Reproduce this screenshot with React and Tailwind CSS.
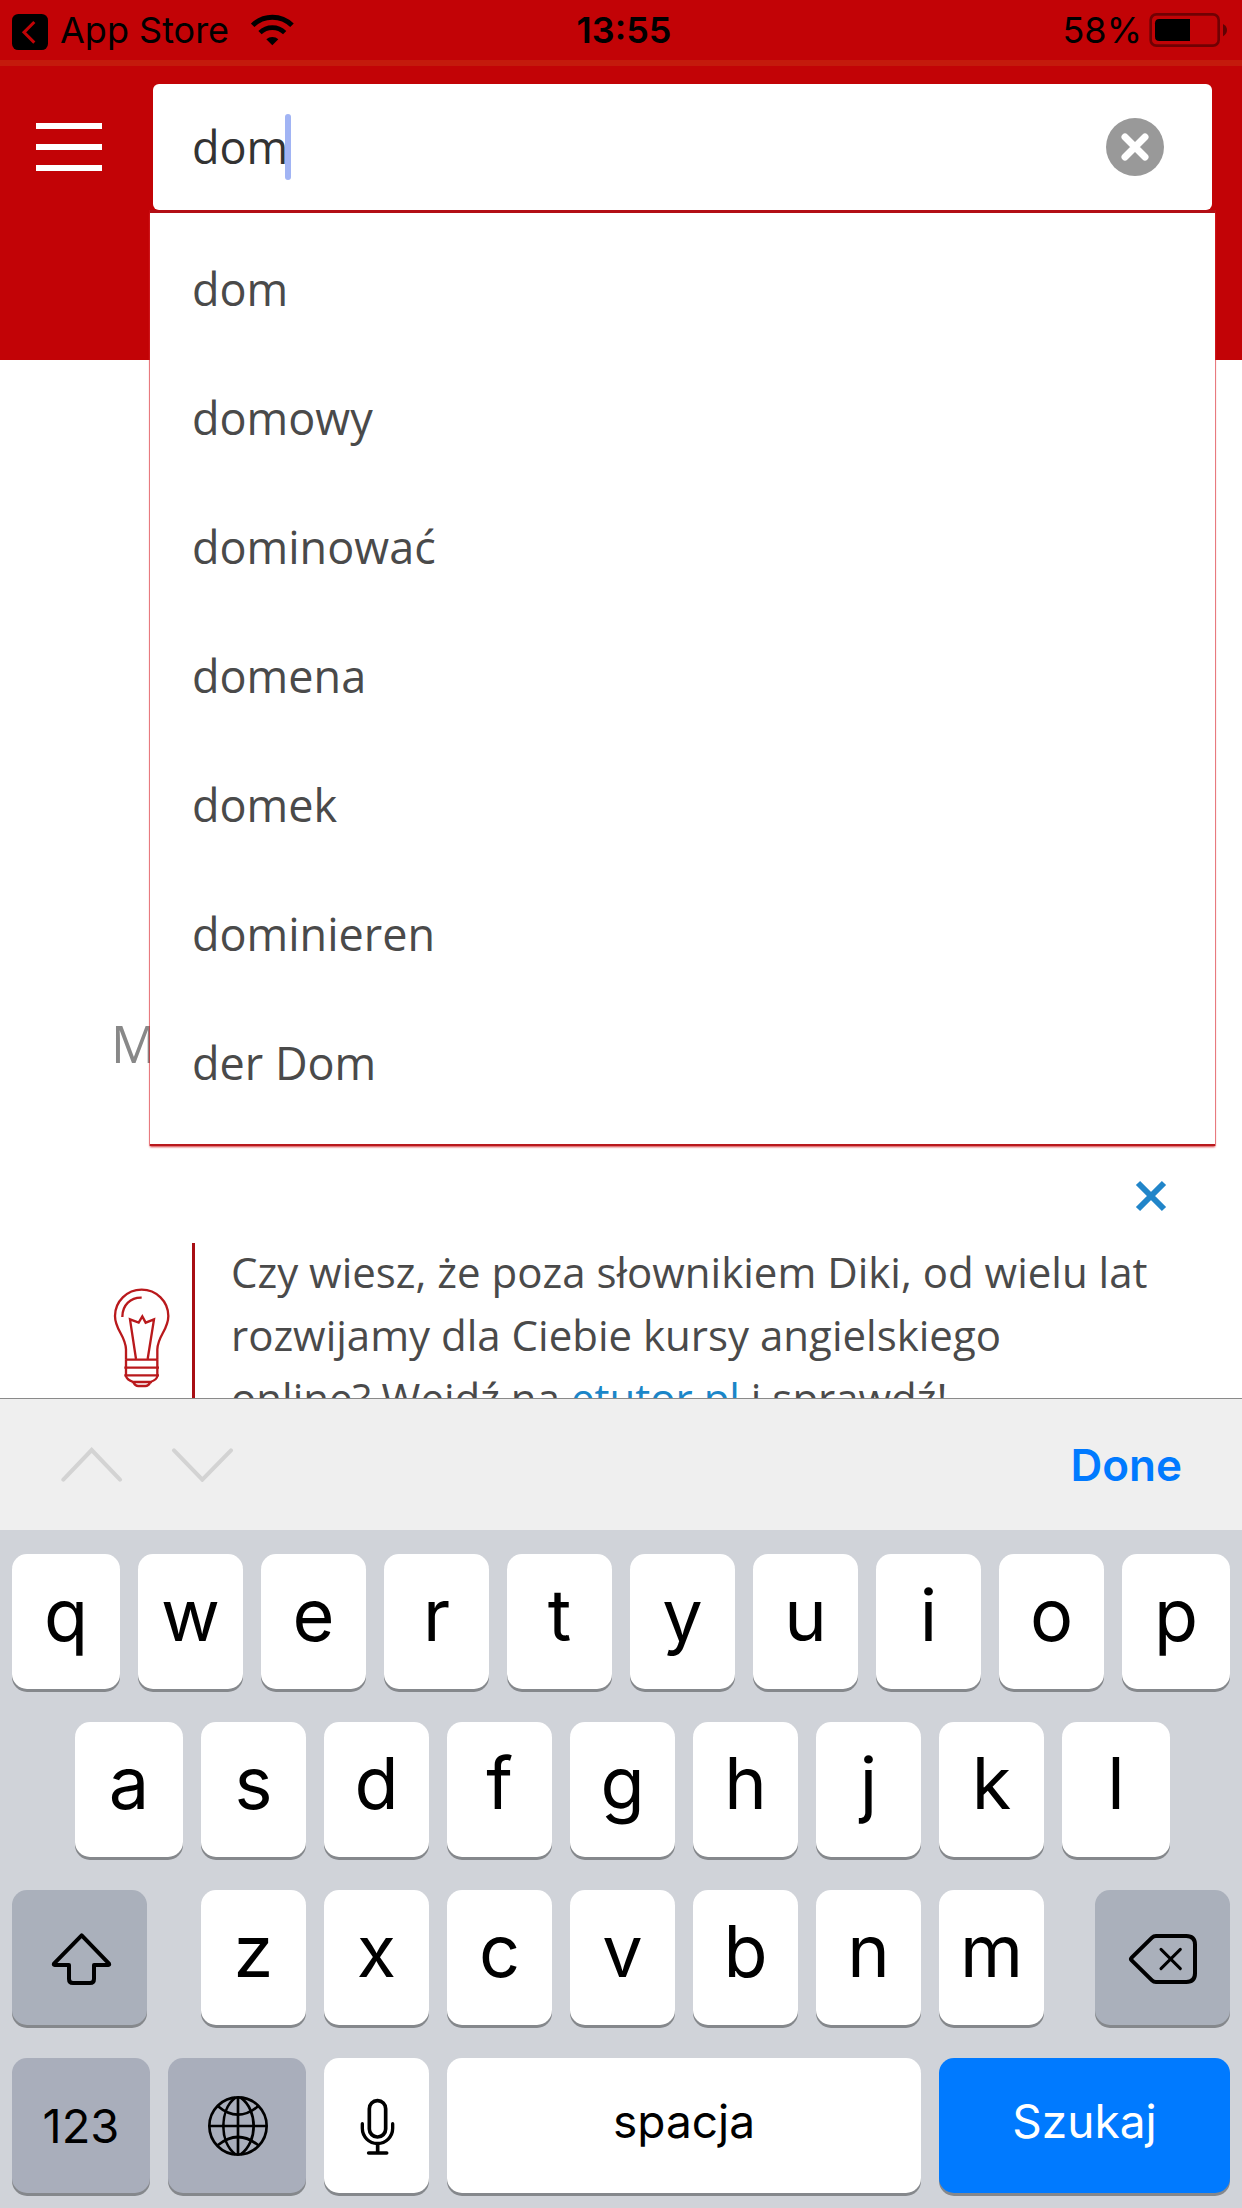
import { useState } from 'react'

const SUGGESTIONS = ['dom', 'domowy', 'dominować', 'domena', 'domek', 'dominieren', 'der Dom']

const ROW_1 = ['q', 'w', 'e', 'r', 't', 'y', 'u', 'i', 'o', 'p']
const ROW_2 = ['a', 's', 'd', 'f', 'g', 'h', 'j', 'k', 'l']
const ROW_3 = ['z', 'x', 'c', 'v', 'b', 'n', 'm']

// outer keys of the first two rows are a touch wider than the rest
const LETTER = 'flex-1 bg-white text-[72px] pb-3.5'
const LETTER_EDGE = 'flex-[105_1_0%] first:flex-[108_1_0%] last:flex-[108_1_0%] bg-white text-[72px] pb-3.5'

function BackIcon() {
  return (
    <svg viewBox="36 30 108 120" className="w-9 h-10" aria-hidden="true">
      <rect x="36" y="42" width="108" height="108" rx="19" fill="#000" />
      <path d="M103 66L72 97L103 128" fill="none" stroke="#c20306" strokeWidth="9" />
    </svg>
  )
}

function WifiIcon() {
  return (
    <svg viewBox="756 42 129 96" className="w-[43px] h-8" aria-hidden="true">
      <path d="M761 76A84 84 0 0 1 879 76" fill="none" stroke="#000" strokeWidth="15" />
      <path d="M783 98A53 53 0 0 1 857 98" fill="none" stroke="#000" strokeWidth="14" />
      <path d="M820 136L802 118A26 26 0 0 1 838 118Z" fill="#000" />
    </svg>
  )
}

function BatteryIcon() {
  return (
    <svg viewBox="918 36 240 108" className="w-20 h-9" aria-hidden="true">
      <rect x="926" y="43" width="204" height="94" rx="17" fill="none" stroke="#000" strokeOpacity="0.42" strokeWidth="8" />
      <path d="M1044 57H952Q939 57 939 70V110Q939 123 952 123H1044Z" fill="#000" />
      <path d="M1143 72Q1155 78 1155 90Q1155 102 1143 109Z" fill="#000" fillOpacity="0.5" />
    </svg>
  )
}

function ClearIcon() {
  return (
    <svg viewBox="0 0 58 58" className="w-[58px] h-[58px]" aria-hidden="true">
      <circle cx="29" cy="29" r="29" fill="#999" />
      <path d="M19 19L39 39M39 19L19 39" stroke="#fff" strokeWidth="7" strokeLinecap="round" />
    </svg>
  )
}

function BulbIcon() {
  return (
    <svg
      viewBox="69 924 171 300"
      className="w-[57px] h-[100px]"
      fill="none"
      stroke="#b9191c"
      strokeWidth="7"
      aria-hidden="true"
    >
      <path d="M108 1138V1108C106 1065 75 1050 75 1008A80 79 0 0 1 235 1008C235 1050 204 1065 202 1108V1138" />
      <path d="M97 1011C97 975 122 952 155 953" />
      <path d="M138 1137L120 1018L146 1028L157 1009L167 1028L192 1018L173 1137" />
      <path d="M107 1139H203M103 1163H207M103 1186H207" />
      <path d="M108 1138V1188Q110 1199 130 1206Q135 1218 145 1218H166Q176 1218 181 1206Q201 1199 202 1188V1138M125 1206H186" />
    </svg>
  )
}

function ShiftIcon() {
  return (
    <svg viewBox="138 198 201 189" className="w-[67px] h-[63px]" aria-hidden="true">
      <path
        d="M245 226L327 311Q329 315 325 315H282V357Q282 369 270 369H219Q207 369 207 357V315H164Q160 315 162 311Z"
        fill="none"
        stroke="#000"
        strokeWidth="12"
        strokeLinejoin="round"
      />
    </svg>
  )
}

function DeleteIcon() {
  return (
    <svg
      viewBox="861 207 213 171"
      className="w-[71px] h-[57px]"
      fill="none"
      stroke="#000"
      strokeLinejoin="round"
      strokeLinecap="round"
      aria-hidden="true"
    >
      <path
        d="M948 228H1039Q1065 228 1065 254V340Q1065 366 1039 366H948Q941 366 936 361L875 301Q871 297 875 293L936 233Q941 228 948 228Z"
        strokeWidth="12"
      />
      <path d="M963 268L1021 326M1021 268L963 326" strokeWidth="9" />
    </svg>
  )
}

function GlobeIcon() {
  return (
    <svg
      viewBox="615 702 192 189"
      className="w-16 h-[63px]"
      fill="none"
      stroke="#000"
      strokeWidth="8"
      aria-hidden="true"
    >
      <circle cx="714" cy="798" r="86" />
      <path d="M714 712V884M628 798H800" />
      <path d="M706 713C658 750 658 846 706 883M722 713C774 750 774 846 722 883" />
      <path d="M653 738Q714 790 775 738M653 856Q714 806 775 856" />
    </svg>
  )
}

function MicIcon() {
  return (
    <svg
      viewBox="1068 702 123 189"
      className="w-[41px] h-[63px]"
      fill="none"
      stroke="#000"
      strokeLinecap="round"
      aria-hidden="true"
    >
      <rect x="1108" y="722" width="49" height="109" rx="24" strokeWidth="11" />
      <path d="M1087 791V805A45 45 0 0 0 1178 805V791" strokeWidth="10" />
      <path d="M1133 852V878M1106 879H1160" strokeWidth="11" />
    </svg>
  )
}

function Key({ children, label, className }) {
  return (
    <button
      type="button"
      aria-label={label}
      className={`flex h-[135px] min-w-0 items-center justify-center rounded-[15px] leading-none shadow-[0_3px_0_#85888c] ${className}`}
    >
      {children}
    </button>
  )
}

function Keyboard() {
  return (
    <div className="flex flex-col gap-[33px] bg-[#d0d3d9] px-3 pt-6 pb-[15px] text-black">
      <div className="flex gap-[18px]">
        {ROW_1.map(k => <Key key={k} className={LETTER_EDGE}>{k}</Key>)}
      </div>
      <div className="flex gap-[18px] pr-[60px] pl-[63px]">
        {ROW_2.map(k => <Key key={k} className={LETTER_EDGE}>{k}</Key>)}
      </div>
      <div className="flex">
        <Key label="Shift" className="w-[135px] bg-[#aab0bb]"><ShiftIcon /></Key>
        <div className="flex flex-1 gap-[18px] pr-[51px] pl-[54px]">
          {ROW_3.map(k => <Key key={k} className={LETTER}>{k}</Key>)}
        </div>
        <Key label="Usuń" className="w-[135px] bg-[#aab0bb]"><DeleteIcon /></Key>
      </div>
      <div className="flex gap-[18px]">
        <Key className="w-[138px] bg-[#a9aebb] text-[47px]">123</Key>
        <Key label="Język" className="w-[138px] bg-[#a9aebb]"><GlobeIcon /></Key>
        <Key label="Dyktowanie" className="w-[105px] bg-white"><MicIcon /></Key>
        <Key className="flex-1 bg-white text-[46px] pb-2.5">spacja</Key>
        <Key className="w-[291px] bg-[#007aff] text-[46px] text-white pb-2.5">Szukaj</Key>
      </div>
    </div>
  )
}

export default function App() {
  const [query, setQuery] = useState('dom')
  const [tipOpen, setTipOpen] = useState(true)

  return (
    <div className="flex h-screen flex-col overflow-hidden bg-white font-['Open_Sans',sans-serif] text-[#4a4a4a]">
      <header className="relative z-10 h-[360px] shrink-0 bg-[#c20306]">
        {/* Status bar */}
        <div className="grid h-[66px] grid-cols-[1fr_auto_1fr] items-center border-b-6 border-[#c41a0c] pr-[14px] pl-3 font-['Inter',sans-serif] text-[36px] leading-none text-black">
          <div className="flex items-center">
            <BackIcon />
            <span className="pr-[22px] pl-3">App Store</span>
            <WifiIcon />
          </div>
          <span className="pl-2 font-semibold">13:55</span>
          <div className="flex items-center justify-end gap-1.5">
            <span>58%</span>
            <BatteryIcon />
          </div>
        </div>

        {/* Search */}
        <div className="flex items-start pt-[18px] pr-[30px] pl-9">
          <button type="button" aria-label="Menu" className="mt-[39px] mr-[51px] flex w-[66px] flex-col gap-[15px]">
            <span className="h-1.5 bg-white" />
            <span className="h-1.5 bg-white" />
            <span className="h-1.5 bg-white" />
          </button>
          <div className="relative flex-1">
            <div className="flex h-[126px] items-center rounded-md bg-white pr-12 pl-[39px]">
              <input
                type="text"
                aria-label="Szukaj"
                value={query}
                onChange={e => setQuery(e.target.value)}
                className="min-w-0 flex-1 bg-transparent text-[45px] text-[#333] caret-transparent outline-none"
              />
              <button type="button" aria-label="Wyczyść" onClick={() => setQuery('')}>
                <ClearIcon />
              </button>
            </div>
            {query && <span className="absolute top-[30px] left-[132px] h-[66px] w-1.5 rounded-full bg-[#a1b4f4]" />}
            {query && (
              <ul className="absolute top-full -right-[3px] -left-[3px] border-t-3 border-[#b30f15] bg-white pt-[11px] pb-[17px] shadow-[0_2px_0_#b9191d,0_1px_0_1px_rgba(215,20,30,0.4),0_3px_2px_#d8383c]">
                {SUGGESTIONS.map(s => (
                  <li key={s}>
                    <button
                      type="button"
                      onClick={() => setQuery(s)}
                      className="block h-[129px] w-full pl-[42px] text-left text-[45px]"
                    >
                      {s}
                    </button>
                  </li>
                ))}
              </ul>
            )}
          </div>
        </div>
      </header>

      <main className="min-h-0 flex-1 overflow-hidden pt-[645px]">
        <h1 className="pl-[111px] text-[51px] leading-[76px] text-[#888]">M</h1>
        {tipOpen && (
          <section className="pr-[93px] pl-[113px]">
            <div className="flex justify-end pt-[97px]">
              <button type="button" aria-label="Zamknij" className="-mr-5" onClick={() => setTipOpen(false)}>
                <svg viewBox="0 0 36 36" className="w-9 h-9" aria-hidden="true">
                  <path d="M5 5L31 31M31 5L5 31" stroke="#2185c9" strokeWidth="6" />
                </svg>
              </button>
            </div>
            <div className="mt-[26px] flex">
              <div className="pt-12 pr-[22px]">
                <BulbIcon />
              </div>
              <div className="mt-[3px] w-[3px] bg-[#a80f14]" />
              <p className="flex-1 pl-9 text-[42px] leading-[63px]">
                Czy wiesz, że poza słownikiem Diki, od wielu lat rozwijamy dla Ciebie kursy
                angielskiego online? Wejdź na{' '}
                <a href="#etutor" className="text-[#1b86c8]">etutor.pl</a> i sprawdź!
              </p>
            </div>
          </section>
        )}
      </main>

      <footer className="shrink-0 font-['Inter',sans-serif]">
        {/* Form navigation above the keys */}
        <div className="flex h-[132px] items-center border-t border-[#8a8a8a] bg-[#efefef] px-[60px]">
          <button type="button" aria-label="Poprzednie pole" disabled className="mr-12">
            <svg viewBox="180 195 189 105" className="w-[63px] h-[35px]" aria-hidden="true">
              <path d="M190 293L275 204L360 293" fill="none" stroke="#d3d3d3" strokeWidth="12" strokeLinecap="round" />
            </svg>
          </button>
          <button type="button" aria-label="Następne pole" disabled>
            <svg viewBox="513 195 189 105" className="w-[63px] h-[35px]" aria-hidden="true">
              <path d="M522 205L607 293L693 205" fill="none" stroke="#d3d3d3" strokeWidth="12" strokeLinecap="round" />
            </svg>
          </button>
          <button type="button" className="ml-auto text-[44px] font-semibold text-[#007aff]">Done</button>
        </div>
        <Keyboard />
      </footer>
    </div>
  )
}
